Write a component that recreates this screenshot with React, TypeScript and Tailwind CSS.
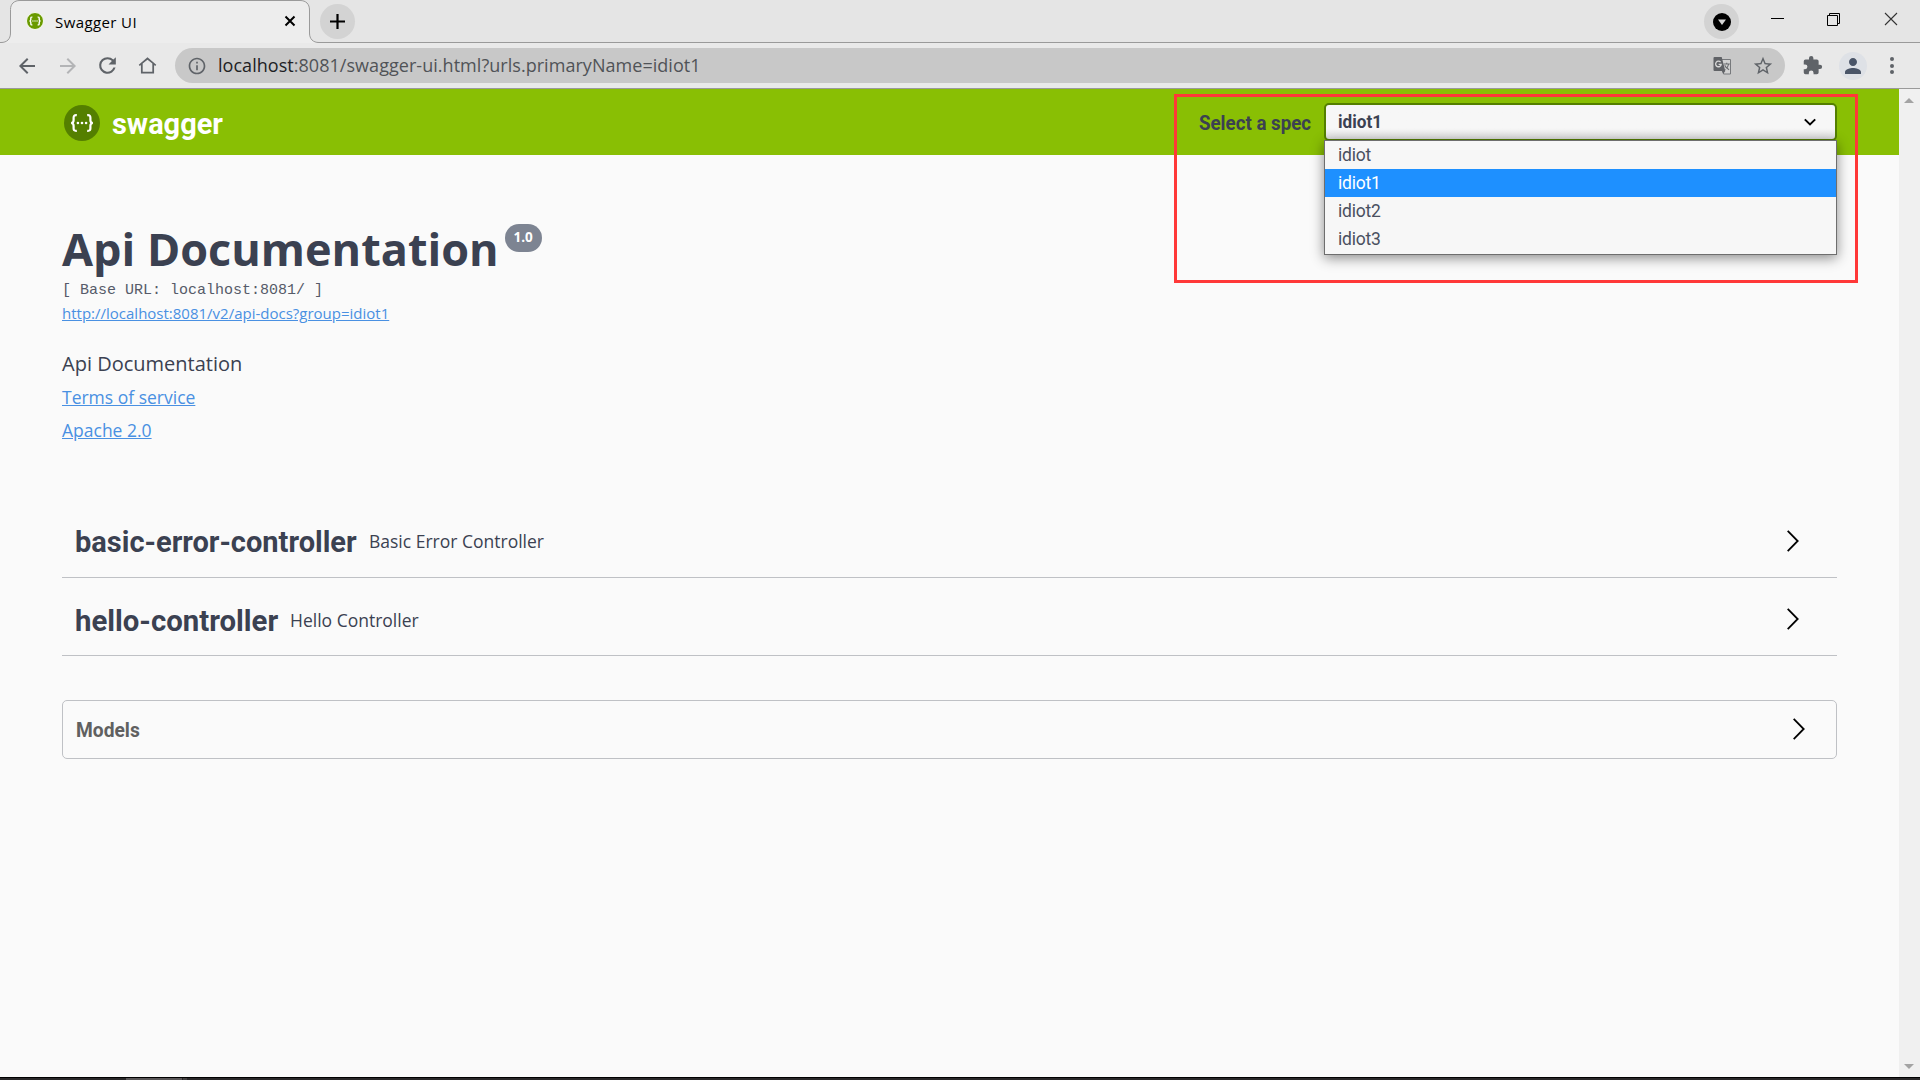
import type { ReactNode } from "react";

function SwaggerMark({ className, disc, ring, weight }: { className: string; disc: string; ring?: string; weight: number }) {
  return (
    <svg className={className} viewBox="0 0 36 36" fill="none">
      <circle cx="18" cy="18" r={ring ? 17 : 18} fill={disc} stroke={ring} strokeWidth={ring ? 2 : 0} />
      <path
        d="M12.8 10.2c-2.6-.2-3.2.7-3.2 2.6v2.4c0 1.7-.7 2.6-2.4 2.8 1.7.2 2.4 1.1 2.4 2.8v2.4c0 1.9.6 2.8 3.2 2.6M23.2 10.2c2.6-.2 3.2.7 3.2 2.6v2.4c0 1.7.7 2.6 2.4 2.8-1.7.2-2.4 1.1-2.4 2.8v2.4c0 1.9-.6 2.8-3.2 2.6"
        stroke="#fff"
        strokeWidth={weight}
      />
      <circle cx="13.9" cy="18" r="1.3" fill="#fff" />
      <circle cx="18" cy="18" r="1.3" fill="#fff" />
      <circle cx="22.1" cy="18" r="1.3" fill="#fff" />
    </svg>
  );
}

function Glyph({ d, className }: { d: string; className: string }) {
  return (
    <svg viewBox="0 0 24 24" className={className} fill="currentColor">
      <path d={d} />
    </svg>
  );
}

const ICONS = {
  back: "M20 11H7.83l5.59-5.59L12 4l-8 8 8 8 1.41-1.41L7.83 13H20v-2z",
  forward: "M12 4l-1.41 1.41L16.17 11H4v2h12.17l-5.58 5.59L12 20l8-8z",
  reload:
    "M17.65 6.35A7.958 7.958 0 0 0 12 4a8 8 0 1 0 7.73 10h-2.08A6 6 0 1 1 12 6c1.66 0 3.14.69 4.22 1.78L13 11h7V4l-2.35 2.35z",
  home: "M12 5.3 6.5 9.8V19h11V9.8L12 5.3zM12 2.7l10 8.3-1.2 1.5-1.3-1V21h-15v-9.5l-1.3 1L2 11 12 2.7z",
  info: "M11 7h2v2h-2zm0 4h2v6h-2zm1-9C6.48 2 2 6.48 2 12s4.48 10 10 10 10-4.48 10-10S17.52 2 12 2zm0 18c-4.41 0-8-3.59-8-8s3.59-8 8-8 8 3.59 8 8-3.59 8-8 8z",
  star: "M22 9.24l-7.19-.62L12 2 9.19 8.63 2 9.24l5.46 4.73L5.82 21 12 17.27 18.18 21l-1.63-7.03L22 9.24zM12 15.4l-3.76 2.27 1-4.28-3.32-2.88 4.38-.38L12 6.1l1.71 4.04 4.38.38-3.32 2.88 1 4.28L12 15.4z",
  puzzle:
    "M20.5 11H19V7a2 2 0 0 0-2-2h-4V3.5a2.5 2.5 0 0 0-5 0V5H4a2 2 0 0 0-2 2v3.8h1.5a2.7 2.7 0 0 1 0 5.4H2V20a2 2 0 0 0 2 2h3.8v-1.5a2.7 2.7 0 0 1 5.4 0V22H17a2 2 0 0 0 2-2v-4h1.5a2.5 2.5 0 0 0 0-5z",
  person: "M12 12c2.21 0 4-1.79 4-4s-1.79-4-4-4-4 1.79-4 4 1.79 4 4 4zm0 2c-2.67 0-8 1.34-8 4v2h16v-2c0-2.66-5.33-4-8-4z",
};

function TranslateIcon() {
  return (
    <svg className="size-[19px]" viewBox="0 0 19 19">
      <path d="M7 3.5h10.5v14.5H10.5L7 3.5z" fill="#d2d2d2" stroke="#77797c" strokeWidth="1" />
      <path d="M1.5 1h7.2l3.6 14H1.5A1 1 0 0 1 .5 14V2a1 1 0 0 1 1-1z" fill="#606266" />
      <path d="M8.9 15h3.4l-2 2.8z" fill="#606266" />
      <path d="M7.6 6.2A2.8 2.8 0 1 0 8.2 8.3H5.6" stroke="#d8d8d8" strokeWidth="1.3" fill="none" />
      <path
        d="M10.8 8h6M13.7 6.8V8M15.7 8c-.5 2.6-2.1 4.4-3.6 5.4M11.7 9.2c.8 2 2.5 3.6 4.4 4.5"
        stroke="#6b6d70"
        strokeWidth="1.1"
        fill="none"
      />
    </svg>
  );
}

function TabStrip() {
  return (
    <div className="relative flex h-[43px] items-center bg-[#e5e5e5]">
      <div className="absolute inset-x-0 bottom-0 h-px bg-[#9a9a9a]" />
      <svg className="absolute top-0 left-0 h-[43px] w-[330px]" viewBox="0 0 330 43" fill="none">
        <path
          d="M0 43V42.5H1C7 42.5 10.5 39 10.5 33V9.5C10.5 4 14 .5 20 .5H300C306 .5 309.5 4 309.5 10V33C309.5 39 313 42.5 319 42.5H330V43z"
          fill="#ededed"
        />
        <path
          d="M0 42.5H1C7 42.5 10.5 39 10.5 33V9.5C10.5 4 14 .5 20 .5H300C306 .5 309.5 4 309.5 10V33C309.5 39 313 42.5 319 42.5H330"
          stroke="#9a9a9a"
        />
      </svg>
      <div className="relative flex h-full w-[320px] items-center pb-px pl-[26px]">
        <SwaggerMark className="size-[18px]" disc="#6a9a00" ring="#f8fbf0" weight={2.8} />
        <span className="ml-[11px] h-[42px] text-[15px] leading-[44px] tracking-[0.4px] text-black">Swagger UI</span>
        <svg className="absolute top-[15px] left-[284px] size-3" viewBox="0 0 12 12">
          <path d="M1.5 1.5l9 9M10.5 1.5l-9 9" stroke="#000" strokeWidth="2" />
        </svg>
      </div>
      <div className="mb-px flex size-[35px] items-center justify-center rounded-full bg-[#d3d3d3]">
        <svg className="size-[15px]" viewBox="0 0 15 15">
          <path d="M7.5 0v15M0 7.5h15" stroke="#000" strokeWidth="2.2" />
        </svg>
      </div>
      <div className="mb-px ml-auto flex size-[35px] items-center justify-center rounded-full bg-[#d3d3d3]">
        <svg className="mt-px size-[18px]" viewBox="0 0 18 18">
          <circle cx="9" cy="9" r="9" fill="#000" />
          <path d="M5 6.5h8L9 12z" fill="#d6d6d6" />
        </svg>
      </div>
      <svg className="mr-[21px] mb-[6px] ml-8 h-[14px] w-32" viewBox="0 0 128 14" fill="none" stroke="#000">
        <path d="M0 6.5h13" strokeWidth="1" />
        <path d="M56.500 3.500h10v10h-10zM58.500 3.500v-2h10v10h-2" strokeWidth="1" />
        <path d="M114 1l12 12M126 1l-12 12" strokeWidth="1.1" stroke="#333" />
      </svg>
    </div>
  );
}

function Toolbar() {
  return (
    <div className="flex h-[46px] items-center border-b border-[#9a9a9a] bg-[#e9e9e9] text-[#5f6368]">
      <Glyph d={ICONS.back} className="ml-[15px] size-6" />
      <Glyph d={ICONS.forward} className="ml-[17px] size-6 text-[#b3b4b6]" />
      <Glyph d={ICONS.reload} className="ml-[15px] size-[25px]" />
      <Glyph d={ICONS.home} className="ml-[17px] size-[21px]" />
      <div className="ml-[17px] flex h-[35px] w-[1610px] items-center rounded-full bg-[#c8c8c8]">
        <Glyph d={ICONS.info} className="ml-[12px] size-5" />
        <span className="ml-[11px] text-[18px] leading-[33px] tracking-[0.04px] whitespace-nowrap text-[#505357]">
          <span className="text-[#202124]">localhost</span>:8081/swagger-ui.html?urls.primaryName=idiot1
        </span>
        <div className="mr-[11px] ml-auto flex items-center gap-5">
          <TranslateIcon />
          <Glyph d={ICONS.star} className="size-[22px]" />
        </div>
      </div>
      <Glyph d={ICONS.puzzle} className="ml-[17px] size-[21px]" />
      <div className="ml-4 flex size-7 items-center justify-center rounded-full bg-[#dee1e6] text-[#4a5568]">
        <Glyph d={ICONS.person} className="size-6" />
      </div>
      <div className="ml-[23px] flex flex-col gap-[2.5px]">
        <i className="size-1 rounded-full bg-[#5f6368]" />
        <i className="size-1 rounded-full bg-[#5f6368]" />
        <i className="size-1 rounded-full bg-[#5f6368]" />
      </div>
    </div>
  );
}

function Squeeze({ width, scale, children }: { width: string; scale: string; children: ReactNode }) {
  return (
    <span className={`inline-block whitespace-nowrap font-['Roboto',sans-serif] font-bold ${width}`}>
      <span className={`inline-block origin-left ${scale}`}>{children}</span>
    </span>
  );
}

function SpecMenu() {
  return (
    <div className="relative flex h-[38px] w-[513px] items-center justify-between rounded-[5px] border-2 border-[#547f00] bg-[#f7f7f7] bg-linear-to-b from-[#f7f7f7] from-70% to-[#dedede] pr-[18px] pl-3">
      <span className="pb-px text-[17.5px] leading-[33px]">
        <Squeeze width="w-[44px]" scale="scale-x-[0.98]">idiot1</Squeeze>
      </span>
      <svg className="size-[14px]" viewBox="0 0 14 14">
        <path d="M1.8 4.4L7 9.4l5.2-5" stroke="#000" strokeWidth="2" fill="none" />
      </svg>
      <div className="absolute top-[35px] -left-[2px] w-[513px] border border-[#6e6e6e] bg-[#f7f7f7] pb-px text-[17.5px] leading-[29px] shadow-[0_3px_12px_rgba(0,0,0,0.45)]">
        {["idiot", "idiot1", "idiot2", "idiot3"].map((name) => (
          <div
            key={name}
            className={`h-7 pl-[13px] font-['Roboto',sans-serif] tracking-[-0.2px] ${name === "idiot1" ? "bg-[#1e90ff] text-white" : "text-[#4a5060]"}`}
          >
            {name}
          </div>
        ))}
      </div>
    </div>
  );
}

function Header() {
  return (
    <header className="flex h-[66px] shrink-0 items-center bg-[#89bf04] pr-[62px] pl-[64px]">
      <SwaggerMark className="mt-px size-9" disc="#547f00" weight={2.2} />
      <span className="mt-[2px] ml-3 text-[30px] leading-[66px] text-white">
        <Squeeze width="w-[112px]" scale="scale-x-[0.965]">swagger</Squeeze>
      </span>
      <span className="mt-px mr-[13px] ml-auto text-[20px]">
        <Squeeze width="w-[112px]" scale="scale-x-[0.935]">Select a spec</Squeeze>
      </span>
      <SpecMenu />
    </header>
  );
}

function Chevron() {
  return (
    <svg className="mb-[2px] h-6 w-[14px]" viewBox="0 0 14 24">
      <path d="M1.7 1.8L11.7 12l-10 10.2" stroke="#000" strokeWidth="1.8" fill="none" />
    </svg>
  );
}

function Info() {
  return (
    <section className="mt-[63px] flex flex-col">
      <div className="flex h-[62px] items-start">
        <h2 className="text-[45px] leading-[61px] font-bold whitespace-nowrap">Api Documentation</h2>
        <span className="mt-[6px] ml-[6px] flex h-7 w-[37px] items-center justify-center rounded-full bg-[#7d8492] pb-px text-[13.5px] font-bold text-white">
          1.0
        </span>
      </div>
      <div className="font-['Liberation_Mono',monospace] text-[15px] leading-[22px] text-[#565b69]">[ Base URL: localhost:8081/ ]</div>
      <a className="-mt-px self-start text-[15px] leading-6 text-[#4990e2] underline">http://localhost:8081/v2/api-docs?group=idiot1</a>
      <p className="mt-[27px] text-[20px] leading-6">Api Documentation</p>
      <a className="mt-[9px] self-start text-[17.5px] leading-6 text-[#4990e2] underline">Terms of service</a>
      <a className="mt-[9px] self-start text-[17.5px] leading-6 text-[#4990e2] underline">Apache 2.0</a>
    </section>
  );
}

function Page() {
  return (
    <main className="flex min-w-0 flex-1 flex-col bg-[#fafafa] text-[#3b4151]">
      <Header />
      <div className="flex flex-col px-[62px]">
        <Info />
        <div className="mt-[64px] flex h-[72px] items-center border-b border-[#bfc1c5] pr-[37px] pl-[13px]">
          <h3 className="mb-[2px] text-[30px] leading-[69px]">
            <Squeeze width="w-[294px]" scale="scale-x-[0.967]">basic-error-controller</Squeeze>
          </h3>
          <small className="text-[17.5px]">Basic Error Controller</small>
          <span className="ml-auto"><Chevron /></span>
        </div>
        <div className="mt-[7px] flex h-[71px] items-center border-b border-[#bfc1c5] pr-[37px] pl-[13px]">
          <h3 className="text-[30px] leading-[70px]">
            <Squeeze width="w-[215px]" scale="scale-x-[0.978]">hello-controller</Squeeze>
          </h3>
          <small className="text-[17.5px]">Hello Controller</small>
          <span className="ml-auto"><Chevron /></span>
        </div>
        <div className="mt-[44px] flex h-[59px] items-center rounded-[5px] border border-[#bfc1c5] pr-[30px] pl-[13px]">
          <h4 className="text-[20px] leading-[57px] text-[#606060]">
            <Squeeze width="w-[64px]" scale="scale-x-[0.960]">Models</Squeeze>
          </h4>
          <span className="ml-auto"><Chevron /></span>
        </div>
      </div>
    </main>
  );
}

function Scrollbar() {
  return (
    <div className="flex w-[21px] flex-col items-center justify-between bg-[#f0f0f0] pt-[9px] pb-2">
      <svg className="-ml-px h-[5px] w-[10px]" viewBox="0 0 10 5"><path d="M5 0l5 5H0z" fill="#a3a3a3" /></svg>
      <svg className="-ml-px h-[5px] w-[10px]" viewBox="0 0 10 5"><path d="M0 0h10L5 5z" fill="#a3a3a3" /></svg>
    </div>
  );
}

export default function App() {
  return (
    <div className="relative flex h-[1080px] w-[1920px] flex-col overflow-hidden font-['Open_Sans',sans-serif]">
      <TabStrip />
      <Toolbar />
      <div className="flex min-h-0 flex-1">
        <Page />
        <Scrollbar />
      </div>
      <div className="flex h-[3px] shrink-0 border-t border-black bg-[#2a2829] pl-[126px]">
        <div className="h-[2px] w-14 bg-[#5a5758]" />
        <div className="ml-px h-[2px] w-1 bg-[#434142]" />
      </div>
      <div className="pointer-events-none absolute top-[94px] left-[1174px] h-[189px] w-[684px] border-[3px] border-[#ff3838]" />
    </div>
  );
}
